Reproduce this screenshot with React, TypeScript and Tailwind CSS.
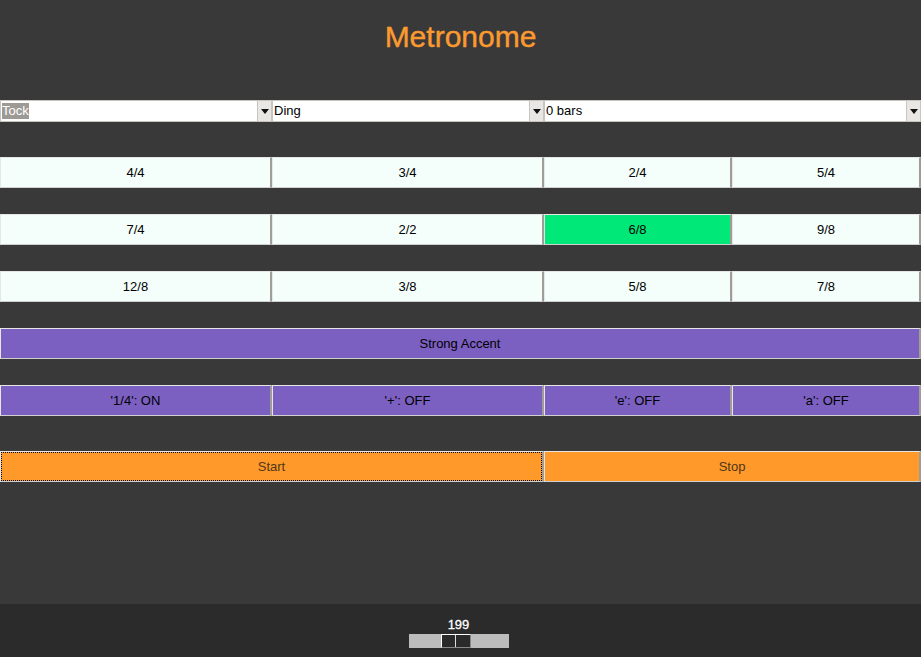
import React, { useState } from 'react';

const signatures = [
    ['4/4', '3/4', '2/4', '5/4'],
    ['7/4', '2/2', '6/8', '9/8'],
    ['12/8', '3/8', '5/8', '7/8'],
];

const cols = 'grid grid-cols-[272px_272px_188px_189px]';

function Combo({ value, selected, className = '' }: { value: string; selected?: boolean; className?: string }) {
    return (
        <div className={`h-[22px] flex items-stretch bg-white border border-[#c8c5c0] ${className}`}>
            <div className="flex-1 flex items-center px-[1px] text-[13px] text-black">
                {selected ? <span className="bg-[#9d9a95] text-white leading-[16px]">{value}</span> : <span>{value}</span>}
            </div>
            <div className="w-[14px] bg-[#e9e7e3] border-l border-[#c8c5c0] flex items-center justify-center">
                <svg width="8" height="5" viewBox="0 0 8 5"><path d="M0 0 L8 0 L4 5 Z" fill="#111" /></svg>
            </div>
        </div>
    );
}

function Btn({ label, bg, focus, text = 'text-black', className = '' }: { label: string; bg: string; focus?: boolean; text?: string; className?: string }) {
    return (
        <button
            className={`h-[31px] ${bg} ${text} border-t border-l border-[#e6e6e6] border-b border-b-[#d0d0d0] border-r-2 border-r-[#a09d98] text-[13px] relative ${className}`}
        >
            {focus && <span className="absolute inset-0 border border-dotted border-black" />}
            {label}
        </button>
    );
}

export default function App() {
    const [active, setActive] = useState('6/8');

    return (
        <div className="w-[921px] h-[657px] bg-[#393939] flex flex-col font-['Liberation_Sans',Arial,sans-serif]">
            <div className="h-[100px] flex justify-center pt-[20px]">
                <h1 className="text-[30px] leading-[34px] text-[#fc9a30] font-['Liberation_Sans',Arial,sans-serif] [-webkit-text-stroke:0.4px_#fc9a30]">Metronome</h1>
            </div>

            <div className={cols}>
                <Combo value="Tock" selected />
                <Combo value="Ding" />
                <Combo value="0 bars" className="col-span-2" />
            </div>

            <div className="flex flex-col gap-[26px] mt-[35px]">
                {signatures.map((row, i) => (
                    <div key={i} className={cols}>
                        {row.map(s => (
                            <div key={s} onClick={() => setActive(s)} className="flex">
                                <Btn label={s} bg={s === active ? 'bg-[#00e878]' : 'bg-[#f4fffb]'} className="flex-1" />
                            </div>
                        ))}
                    </div>
                ))}

                <Btn label="Strong Accent" bg="bg-[#7b5fc1]" className="w-full" />

                <div className={cols}>
                    {["'1/4': ON", "'+': OFF", "'e': OFF", "'a': OFF"].map(l => (
                        <Btn key={l} label={l} bg="bg-[#7b5fc1]" />
                    ))}
                </div>
            </div>

            <div className="grid grid-cols-[544px_377px] mt-[35px]">
                <Btn label="Start" bg="bg-[#ff9a2a]" focus text="text-[#4f3519]" />
                <Btn label="Stop" bg="bg-[#ff9a2a]" text="text-[#4f3519]" />
            </div>

            <div className="flex-1" />

            <div className="h-[53px] bg-[#2b2b2b] flex flex-col items-center pt-[14px] pr-[4px]">
                <span className="text-[13px] leading-[14px] text-white [-webkit-text-stroke:0.3px_white]">199</span>
                <div className="mt-[2px] w-[100px] h-[14px] bg-[#bcbcbc] flex pl-[32px]">
                    <div className="w-[30px] h-[14px] bg-[#2a2a2a] border border-white border-b-[#888] border-r-[#888] flex">
                        <div className="w-1/2 border-r border-[#ddd]" />
                    </div>
                </div>
            </div>
        </div>
    );
}
